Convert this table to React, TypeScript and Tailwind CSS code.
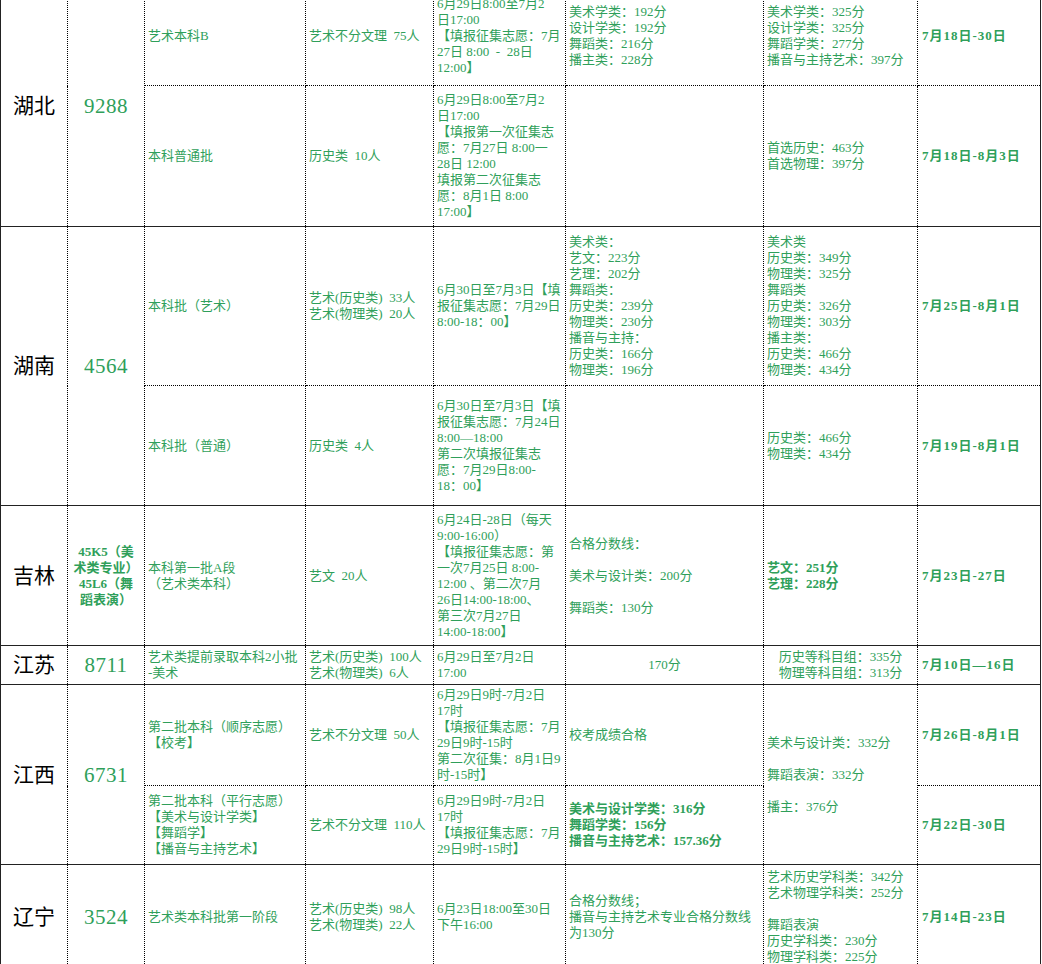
import React from 'react';

// 征集志愿一览表（截图区域：湖北 - 辽宁）
const cell =
  'border border-dotted border-black align-middle px-[3px] text-[13px] leading-4 text-[#2f9f5a]';
const groupRow = 'border-t border-solid border-[#222]';

function Lines({ items, className = '' }: { items: string[]; className?: string }) {
  return (
    <div className={className}>
      {items.map((t, i) => (
        <div key={i} className="h-4 whitespace-pre leading-4">
          {t}
        </div>
      ))}
    </div>
  );
}

function Province({ name, rows }: { name: string; rows?: number }) {
  return (
    <td rowSpan={rows} className={`${cell} text-center text-[21px] text-black`}>
      {name}
    </td>
  );
}

function Code({ value, rows }: { value: string; rows?: number }) {
  return (
    <td rowSpan={rows} className={`${cell} text-center text-[21px] tracking-[0.5px] text-[#1f9b52]`}>
      {value}
    </td>
  );
}

function DateCell({ text, rows }: { text: string; rows?: number }) {
  return (
    <td rowSpan={rows} className={`${cell} pl-[4px] font-bold tracking-[1px] text-[#1f9b52]`}>
      {text}
    </td>
  );
}

export default function App() {
  return (
    <div className="h-[964px] overflow-hidden bg-white font-['Liberation_Serif','Noto_Sans_CJK_SC',serif]">
      <table className="-mt-[15px] w-[1040px] table-fixed border-collapse border border-solid border-[#222]">
        <colgroup>
          <col className="w-[67px]" />
          <col className="w-[77px]" />
          <col className="w-[161px]" />
          <col className="w-[128px]" />
          <col className="w-[132px]" />
          <col className="w-[198px]" />
          <col className="w-[154px]" />
          <col className="w-[123px]" />
        </colgroup>
        <tbody>
          {/* 湖北 */}
          <tr className={`h-[100px] ${groupRow}`}>
            <Province name="湖北" rows={2} />
            <Code value="9288" rows={2} />
            <td className={cell}>艺术本科B</td>
            <td className={cell}>
              <Lines items={['艺术不分文理  75人']} />
            </td>
            <td className={cell}>
              <Lines
                items={['6月29日8:00至7月2', '日17:00', '【填报征集志愿：7月', '27日 8:00  -  28日', '12:00】']}
              />
            </td>
            <td className={cell}>
              <Lines items={['美术学类：192分', '设计学类：192分', '舞蹈类：216分', '播主类：228分']} />
            </td>
            <td className={cell}>
              <Lines items={['美术学类：325分', '设计学类：325分', '舞蹈学类：277分', '播音与主持艺术：397分']} />
            </td>
            <DateCell text="7月18日-30日" />
          </tr>
          <tr className="h-[141px]">
            <td className={cell}>本科普通批</td>
            <td className={cell}>
              <Lines items={['历史类  10人']} />
            </td>
            <td className={cell}>
              <Lines
                items={[
                  '6月29日8:00至7月2',
                  '日17:00',
                  '【填报第一次征集志',
                  '愿：7月27日 8:00一',
                  '28日 12:00',
                  '填报第二次征集志',
                  '愿：8月1日 8:00',
                  '17:00】',
                ]}
              />
            </td>
            <td className={cell}></td>
            <td className={cell}>
              <Lines items={['首选历史：463分', '首选物理：397分']} />
            </td>
            <DateCell text="7月18日-8月3日" />
          </tr>

          {/* 湖南 */}
          <tr className={`h-[159px] ${groupRow}`}>
            <Province name="湖南" rows={2} />
            <Code value="4564" rows={2} />
            <td className={cell}>本科批（艺术）</td>
            <td className={cell}>
              <Lines items={['艺术(历史类)  33人', '艺术(物理类)  20人']} />
            </td>
            <td className={cell}>
              <Lines items={['6月30日至7月3日【填', '报征集志愿：7月29日', '8:00-18：00】']} />
            </td>
            <td className={cell}>
              <Lines
                items={[
                  '美术类：',
                  '艺文：223分',
                  '艺理：202分',
                  '舞蹈类：',
                  '历史类：239分',
                  '物理类：230分',
                  '播音与主持：',
                  '历史类：166分',
                  '物理类：196分',
                ]}
              />
            </td>
            <td className={cell}>
              <Lines
                items={[
                  '美术类',
                  '历史类：349分',
                  '物理类：325分',
                  '舞蹈类',
                  '历史类：326分',
                  '物理类：303分',
                  '播主类：',
                  '历史类：466分',
                  '物理类：434分',
                ]}
              />
            </td>
            <DateCell text="7月25日-8月1日" />
          </tr>
          <tr className="h-[120px]">
            <td className={cell}>本科批（普通）</td>
            <td className={cell}>
              <Lines items={['历史类  4人']} />
            </td>
            <td className={cell}>
              <Lines
                items={[
                  '6月30日至7月3日【填',
                  '报征集志愿：7月24日',
                  '8:00—18:00',
                  '第二次填报征集志',
                  '愿：7月29日8:00-',
                  '18：00】',
                ]}
              />
            </td>
            <td className={cell}></td>
            <td className={cell}>
              <Lines items={['历史类：466分', '物理类：434分']} />
            </td>
            <DateCell text="7月19日-8月1日" />
          </tr>

          {/* 吉林 */}
          <tr className={`h-[140px] ${groupRow}`}>
            <Province name="吉林" />
            <td className={`${cell} text-center font-bold text-[#1f9b52]`}>
              <Lines items={['45K5（美', '术类专业）', '45L6（舞', '蹈表演）']} />
            </td>
            <td className={cell}>
              <Lines items={['本科第一批A段', '（艺术类本科）']} />
            </td>
            <td className={cell}>
              <Lines items={['艺文  20人']} />
            </td>
            <td className={cell}>
              <Lines
                items={[
                  '6月24日-28日（每天',
                  '9:00-16:00）',
                  '【填报征集志愿：第',
                  '一次7月25日 8:00-',
                  '12:00 、第二次7月',
                  '26日14:00-18:00、',
                  '第三次7月27日',
                  '14:00-18:00】',
                ]}
              />
            </td>
            <td className={cell}>
              <Lines items={['合格分数线：', '', '美术与设计类：200分', '', '舞蹈类：130分']} />
            </td>
            <td className={`${cell} font-bold text-[#1f9b52]`}>
              <Lines items={['艺文：251分', '艺理：228分']} />
            </td>
            <DateCell text="7月23日-27日" />
          </tr>

          {/* 江苏 */}
          <tr className={`h-[39px] ${groupRow}`}>
            <Province name="江苏" />
            <Code value="8711" />
            <td className={cell}>
              <Lines items={['艺术类提前录取本科2小批', '-美术']} />
            </td>
            <td className={cell}>
              <Lines items={['艺术(历史类)  100人', '艺术(物理类)  6人']} />
            </td>
            <td className={cell}>
              <Lines items={['6月29日至7月2日', '17:00']} />
            </td>
            <td className={`${cell} text-center`}>170分</td>
            <td className={`${cell} text-center`}>
              <Lines items={['历史等科目组：335分', '物理等科目组：313分']} />
            </td>
            <DateCell text="7月10日—16日" />
          </tr>

          {/* 江西 */}
          <tr className={`h-[101px] ${groupRow}`}>
            <Province name="江西" rows={2} />
            <Code value="6731" rows={2} />
            <td className={cell}>
              <Lines items={['第二批本科（顺序志愿）', '【校考】']} />
            </td>
            <td className={cell}>
              <Lines items={['艺术不分文理  50人']} />
            </td>
            <td className={cell}>
              <Lines
                items={[
                  '6月29日9时-7月2日',
                  '17时',
                  '【填报征集志愿：7月',
                  '29日9时-15时',
                  '第二次征集：8月1日9',
                  '时-15时】',
                ]}
              />
            </td>
            <td className={cell}>校考成绩合格</td>
            <td rowSpan={2} className={cell}>
              <Lines items={['美术与设计类：332分', '', '舞蹈表演：332分', '', '播主：376分']} />
            </td>
            <DateCell text="7月26日-8月1日" />
          </tr>
          <tr className="h-[79px]">
            <td className={cell}>
              <Lines items={['第二批本科（平行志愿）', '【美术与设计学类】', '【舞蹈学】', '【播音与主持艺术】']} />
            </td>
            <td className={cell}>
              <Lines items={['艺术不分文理  110人']} />
            </td>
            <td className={cell}>
              <Lines items={['6月29日9时-7月2日', '17时', '【填报征集志愿：7月', '29日9时-15时】']} />
            </td>
            <td className={`${cell} font-bold text-[#1f9b52]`}>
              <Lines items={['美术与设计学类：316分', '舞蹈学类：156分', '播音与主持艺术：157.36分']} />
            </td>
            <DateCell text="7月22日-30日" />
          </tr>

          {/* 辽宁 */}
          <tr className={`h-[104px] ${groupRow}`}>
            <Province name="辽宁" />
            <Code value="3524" />
            <td className={cell}>艺术类本科批第一阶段</td>
            <td className={cell}>
              <Lines items={['艺术(历史类)  98人', '艺术(物理类)  22人']} />
            </td>
            <td className={cell}>
              <Lines items={['6月23日18:00至30日', '下午16:00']} />
            </td>
            <td className={cell}>
              <Lines items={['合格分数线；', '播音与主持艺术专业合格分数线', '为130分']} />
            </td>
            <td className={cell}>
              <Lines
                items={[
                  '艺术历史学科类：342分',
                  '艺术物理学科类：252分',
                  '',
                  '舞蹈表演',
                  '历史学科类：230分',
                  '物理学科类：225分',
                ]}
              />
            </td>
            <DateCell text="7月14日-23日" />
          </tr>
        </tbody>
      </table>
    </div>
  );
}
